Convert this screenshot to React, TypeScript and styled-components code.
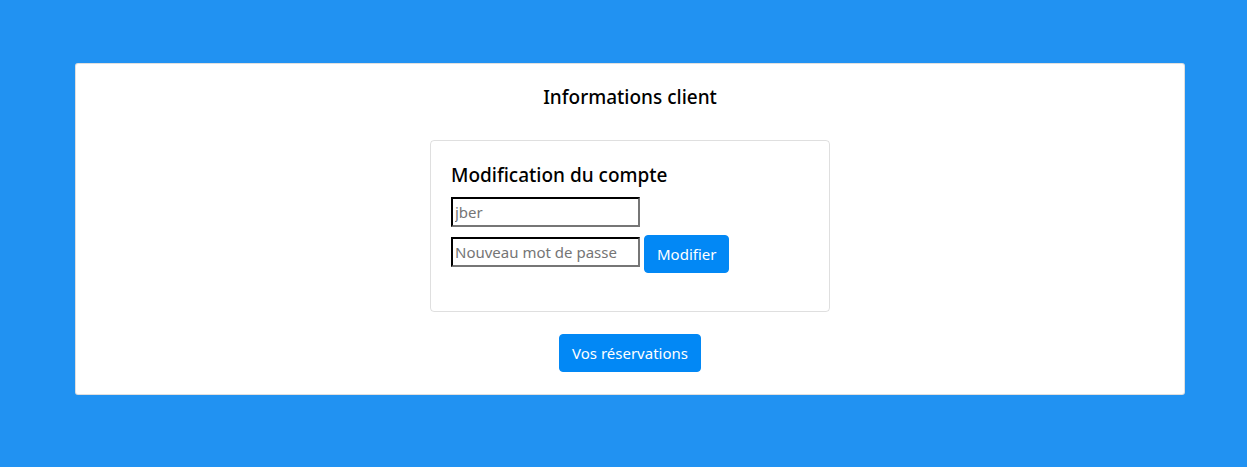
import React from "react";
import styled, { createGlobalStyle } from "styled-components";

const Global = createGlobalStyle`
  html, body { margin: 0; padding: 0; }
  body {
    background: #2192f2;
    font-family: "Noto Sans", "Open Sans", sans-serif;
    font-size: 16px;
    line-height: 1.5;
    color: #212529;
  }
  * { box-sizing: border-box; }
`;

const Page = styled.div`
  display: flex;
  justify-content: center;
  padding: 63px 0 72px 13px;
`;

const OuterCard = styled.section`
  width: 1110px;
  background: #fff;
  border: 1px solid rgba(0, 0, 0, 0.125);
  border-radius: 3px;
  padding: 20px 20px 22px;
  display: flex;
  flex-direction: column;
  align-items: center;
`;

const Title = styled.h5<{ $align?: string }>`
  margin: 0 0 ${(p) => (p.$align === "left" ? "10px" : "31px")};
  padding-top: ${(p) => (p.$align === "left" ? "4px" : "1px")};
  font-size: 19px;
  font-weight: 500;
  line-height: 24px;
  color: #000;
  text-align: ${(p) => p.$align || "center"};
  align-self: stretch;
`;

const InnerCard = styled.div`
  width: 400px;
  border: 1px solid rgba(0, 0, 0, 0.125);
  border-radius: 4px;
  padding: 18px 20px 38px;
  margin-bottom: 22px;
`;

const Row = styled.div<{ $gap?: number }>`
  display: flex;
  align-items: flex-start;
  gap: 4px;
  margin-top: ${(p) => p.$gap ?? 0}px;
`;

const Input = styled.input`
  width: 189px;
  height: 30px;
  padding: 1px 2px;
  border: 2px inset #767676;
  border-top-color: #222;
  border-left-color: #222;
  font-family: "Noto Sans", sans-serif;
  font-size: 15px;
  color: #000;
  background: #fff;
  outline: none;
  &::placeholder { color: #757575; }
`;

const Button = styled.button<{ $lift?: number }>`
  height: 38px;
  margin-top: ${(p) => -(p.$lift ?? 0)}px;
  padding: 0 12px;
  background: #0288f5;
  color: #fff;
  border: 1px solid #0288f5;
  border-radius: 4px;
  font-family: "Noto Sans", sans-serif;
  font-size: 15px;
  line-height: 24px;
  cursor: pointer;
`;

export default function App() {
  return (
    <>
      <Global />
      <Page>
        <OuterCard>
          <Title>Informations client</Title>
          <InnerCard>
            <Title $align="left">Modification du compte</Title>
            <Row>
              <Input placeholder="jber" />
            </Row>
            <Row $gap={10}>
              <Input type="password" placeholder="Nouveau mot de passe" />
              <Button $lift={2}>Modifier</Button>
            </Row>
          </InnerCard>
          <Button>Vos réservations</Button>
        </OuterCard>
      </Page>
    </>
  );
}
